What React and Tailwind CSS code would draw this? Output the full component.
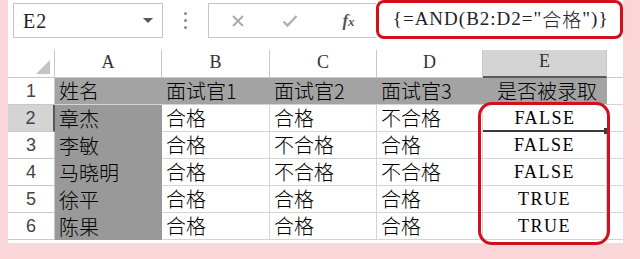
const cols = ["A", "B", "C", "D", "E"];

const rows = [
  ["姓名", "面试官1", "面试官2", "面试官3", "是否被录取"],
  ["章杰", "合格", "合格", "不合格", "FALSE"],
  ["李敏", "合格", "不合格", "合格", "FALSE"],
  ["马晓明", "合格", "不合格", "不合格", "FALSE"],
  ["徐平", "合格", "合格", "合格", "TRUE"],
  ["陈果", "合格", "合格", "合格", "TRUE"],
];

const cjk = "font-[family-name:'Noto_Sans_CJK_SC',sans-serif] font-light";
const serif = "font-[family-name:'Liberation_Serif','Noto_Sans_CJK_SC',serif]";

function Toolbar() {
  return (
    <div className="flex h-[50px] items-start">
      <div className="mt-[3px] ml-[5px] flex h-[35px] w-[150px] items-center justify-between border border-[#c6c6c6] pl-[9px] pr-[9px]">
        <span className={`${serif} text-[20px] tracking-[1px] text-[#222]`}>E2</span>
        <span className="h-0 w-0 border-x-[5px] border-t-[5px] border-x-transparent border-t-[#555]" />
      </div>
      <div className="mt-[12px] flex w-[46px] flex-col items-center gap-[4px]">
        <span className="h-[3px] w-[3px] rounded-full bg-[#8a8a8a]" />
        <span className="h-[3px] w-[3px] rounded-full bg-[#8a8a8a]" />
        <span className="h-[3px] w-[3px] rounded-full bg-[#8a8a8a]" />
      </div>
      <div className="mt-[3px] flex h-[35px] w-[168px] items-center border border-r-0 border-[#c6c6c6]">
        <svg width="14" height="14" viewBox="0 0 14 14" className="ml-[22px]">
          <path d="M2 2 L12 12 M12 2 L2 12" stroke="#a8a8a8" strokeWidth="1.8" fill="none" />
        </svg>
        <svg width="16" height="14" viewBox="0 0 16 14" className="ml-[37px]">
          <path d="M1.5 7.5 L5.5 11.5 L14.5 2" stroke="#b0b0b0" strokeWidth="2.4" fill="none" />
        </svg>
        <span className="ml-[44px] font-[family-name:'Liberation_Serif',serif] text-[17px] font-bold italic text-[#555]">
          f<span className="text-[13px]">x</span>
        </span>
      </div>
      <div className={`flex h-[39px] w-[248px] items-center overflow-hidden whitespace-nowrap rounded-[8px] border-[3px] border-[#d2101c] pl-[14px] ${serif} text-[19px] tracking-[1px] text-[#222]`}>
        {'{=AND(B2:D2="'}
        <span className={cjk}>合格</span>
        {'")}'}
      </div>
    </div>
  );
}

function Sheet() {
  return (
    <div className="relative">
      <div className="grid grid-cols-[47px_107px_108px_107px_106px_124px_16px]">
        <div className="relative h-[28px] border-r border-b border-[#c8c8c8]">
          <svg width="14" height="14" viewBox="0 0 14 14" className="absolute right-[4px] bottom-[3px]">
            <path d="M14 0 L14 14 L0 14 Z" fill="#c4c4c4" />
          </svg>
        </div>
        {cols.map((c) => (
          <div
            key={c}
            className={`flex h-[28px] items-end justify-center pb-[1px] ${serif} text-[18px] text-[#333] ${
              c === "E"
                ? "border-b-2 border-b-[#5a5a5a] bg-[#d4d4d4] border-r border-r-[#c8c8c8]"
                : "border-r border-b border-[#c8c8c8]"
            }`}
          >
            {c}
          </div>
        ))}
        <div className="h-[28px] border-b border-[#c8c8c8]" />

        {rows.map((row, i) => (
          <RowCells key={i} row={row} n={i + 1} />
        ))}
      </div>
      <div className="pointer-events-none absolute left-[470px] top-[52px] h-[143px] w-[132px] rounded-[14px] border-[3px] border-[#d2101c]" />
    </div>
  );
}

function RowCells({ row, n }) {
  const first = n === 1;
  return (
    <>
      <div
        className={`flex h-[27px] items-center justify-center font-[family-name:'Liberation_Sans',sans-serif] text-[18px] text-[#444] ${
          n === 2
            ? "border-r-2 border-r-[#5a5a5a] border-b border-b-[#c8c8c8] bg-[#d4d4d4]"
            : "border-r border-b border-[#c8c8c8]"
        }`}
      >
        {n}
      </div>
      {row.map((v, j) => {
        const gray = first || j === 0;
        const isE = j === 4;
        let cls = "border-r border-b border-[#d4d4d4] bg-white";
        if (gray) cls = first ? "border-b border-[#d4d4d4] bg-[#a3a3a3]" : "bg-[#999999]";
        if (n === 2 && isE) cls = "border-b-2 border-b-[#3a3a3a] bg-white relative";
        return (
          <div
            key={j}
            className={`flex h-[27px] items-center overflow-visible whitespace-nowrap ${
              isE && !first ? `justify-center ${serif} text-[18px] tracking-[1.5px]` : `pl-[4px] ${cjk} text-[20px]`
            } ${isE && first ? "justify-center pl-0" : ""} leading-none text-black ${cls}`}
          >
            {v}
            {n === 2 && isE && (
              <span className="absolute right-[-3px] bottom-[-4px] h-[6px] w-[6px] bg-[#3a3a3a]" />
            )}
          </div>
        );
      })}
      <div className="h-[27px] border-b border-[#d4d4d4]" />
    </>
  );
}

export default function App() {
  return (
    <div className="h-[259px] w-[640px] bg-[#fbd6d9] pl-[8px]">
      <div className="h-[243px] w-[615px] bg-white">
        <Toolbar />
        <Sheet />
      </div>
    </div>
  );
}
